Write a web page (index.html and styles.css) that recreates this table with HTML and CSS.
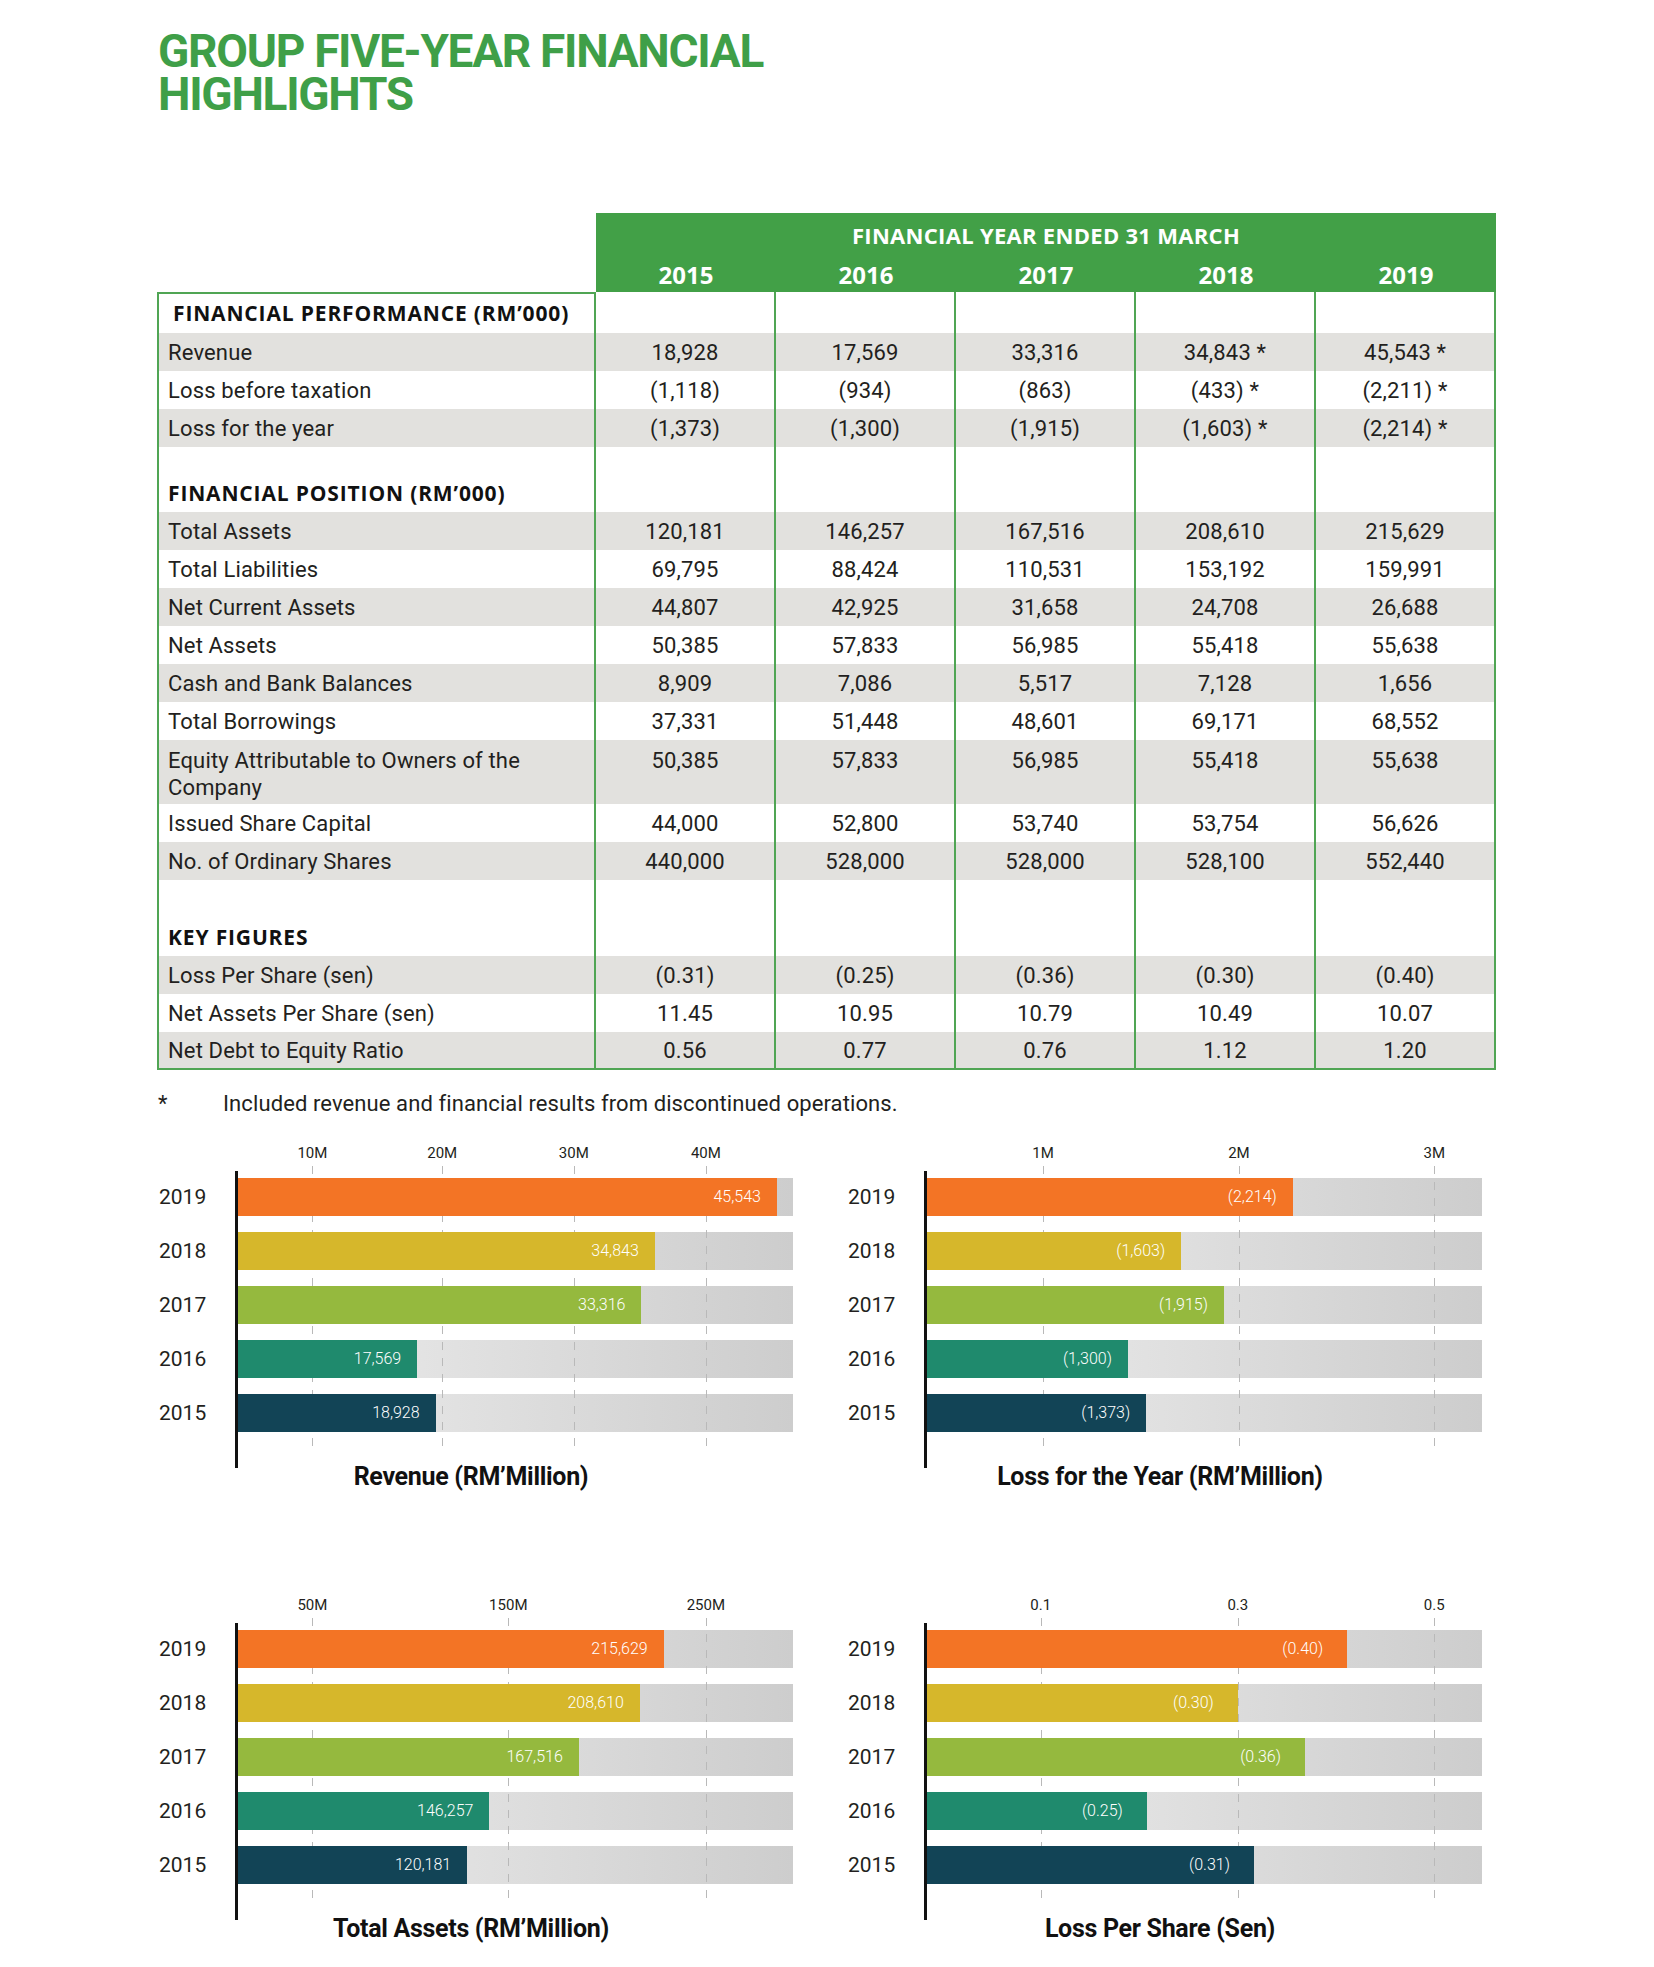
FILE: index.html
```html
<!DOCTYPE html>
<html lang="en">
<head>
<meta charset="utf-8">
<title>Group Five-Year Financial Highlights</title>
<link rel="stylesheet" href="styles.css">
</head>
<body>
<div class="page">
  <h1 class="title">GROUP FIVE-YEAR FINANCIAL<br>HIGHLIGHTS</h1>

  <table class="fin">
    <colgroup>
      <col class="c-lab"><col class="c-yr"><col class="c-yr"><col class="c-yr"><col class="c-yr"><col class="c-yr">
    </colgroup>
    <thead>
      <tr class="h1"><th class="blank"></th><th colspan="5">FINANCIAL YEAR ENDED 31 MARCH</th></tr>
      <tr class="h2"><th class="blank"></th><th>2015</th><th>2016</th><th>2017</th><th>2018</th><th>2019</th></tr>
    </thead>
    <tbody>
      <tr class="sec first"><td class="lab">FINANCIAL PERFORMANCE (RM’000)</td><td></td><td></td><td></td><td></td><td></td></tr>
      <tr class="g"><td class="lab">Revenue</td><td>18,928</td><td>17,569</td><td>33,316</td><td>34,843 *</td><td>45,543 *</td></tr>
      <tr><td class="lab">Loss before taxation</td><td>(1,118)</td><td>(934)</td><td>(863)</td><td>(433) *</td><td>(2,211) *</td></tr>
      <tr class="g"><td class="lab">Loss for the year</td><td>(1,373)</td><td>(1,300)</td><td>(1,915)</td><td>(1,603) *</td><td>(2,214) *</td></tr>
      <tr class="gap1"><td class="lab"></td><td></td><td></td><td></td><td></td><td></td></tr>
      <tr class="sec"><td class="lab">FINANCIAL POSITION (RM’000)</td><td></td><td></td><td></td><td></td><td></td></tr>
      <tr class="g"><td class="lab">Total Assets</td><td>120,181</td><td>146,257</td><td>167,516</td><td>208,610</td><td>215,629</td></tr>
      <tr><td class="lab">Total Liabilities</td><td>69,795</td><td>88,424</td><td>110,531</td><td>153,192</td><td>159,991</td></tr>
      <tr class="g"><td class="lab">Net Current Assets</td><td>44,807</td><td>42,925</td><td>31,658</td><td>24,708</td><td>26,688</td></tr>
      <tr><td class="lab">Net Assets</td><td>50,385</td><td>57,833</td><td>56,985</td><td>55,418</td><td>55,638</td></tr>
      <tr class="g"><td class="lab">Cash and Bank Balances</td><td>8,909</td><td>7,086</td><td>5,517</td><td>7,128</td><td>1,656</td></tr>
      <tr><td class="lab">Total Borrowings</td><td>37,331</td><td>51,448</td><td>48,601</td><td>69,171</td><td>68,552</td></tr>
      <tr class="g eq"><td class="lab">Equity Attributable to Owners of the Company</td><td>50,385</td><td>57,833</td><td>56,985</td><td>55,418</td><td>55,638</td></tr>
      <tr><td class="lab">Issued Share Capital</td><td>44,000</td><td>52,800</td><td>53,740</td><td>53,754</td><td>56,626</td></tr>
      <tr class="g"><td class="lab">No. of Ordinary Shares</td><td>440,000</td><td>528,000</td><td>528,000</td><td>528,100</td><td>552,440</td></tr>
      <tr class="gap2"><td class="lab"></td><td></td><td></td><td></td><td></td><td></td></tr>
      <tr class="sec kf"><td class="lab">KEY FIGURES</td><td></td><td></td><td></td><td></td><td></td></tr>
      <tr class="g"><td class="lab">Loss Per Share (sen)</td><td>(0.31)</td><td>(0.25)</td><td>(0.36)</td><td>(0.30)</td><td>(0.40)</td></tr>
      <tr><td class="lab">Net Assets Per Share (sen)</td><td>11.45</td><td>10.95</td><td>10.79</td><td>10.49</td><td>10.07</td></tr>
      <tr class="g last"><td class="lab">Net Debt to Equity Ratio</td><td>0.56</td><td>0.77</td><td>0.76</td><td>1.12</td><td>1.20</td></tr>
    </tbody>
  </table>

  <p class="note"><span class="star">*</span><span>Included revenue and financial results from discontinued operations.</span></p>

  <div class="charts">
    <!-- Revenue -->
    <div class="chart">
      <div class="ticks">
        <span class="tick" style="left:13.4%">10M</span>
        <span class="tick" style="left:36.8%">20M</span>
        <span class="tick" style="left:60.5%">30M</span>
        <span class="tick" style="left:84.3%">40M</span>
      </div>
      <div class="cbody">
        <div class="years"><span>2019</span><span>2018</span><span>2017</span><span>2016</span><span>2015</span></div>
        <div class="plot">
          <i class="grid" style="left:13.4%"></i><i class="grid" style="left:36.8%"></i><i class="grid" style="left:60.5%"></i><i class="grid" style="left:84.3%"></i>
          <div class="track"><div class="bar c19" style="width:97.1%">45,543</div></div>
          <div class="track"><div class="bar c18" style="width:75.1%">34,843</div></div>
          <div class="track"><div class="bar c17" style="width:72.7%">33,316</div></div>
          <div class="track"><div class="bar c16" style="width:32.3%">17,569</div></div>
          <div class="track"><div class="bar c15" style="width:35.6%">18,928</div></div>
        </div>
      </div>
      <div class="ctitle">Revenue (RM’Million)</div>
    </div>

    <!-- Loss for the year -->
    <div class="chart">
      <div class="ticks">
        <span class="tick" style="left:20.9%">1M</span>
        <span class="tick" style="left:56.2%">2M</span>
        <span class="tick" style="left:91.4%">3M</span>
      </div>
      <div class="cbody">
        <div class="years"><span>2019</span><span>2018</span><span>2017</span><span>2016</span><span>2015</span></div>
        <div class="plot">
          <i class="grid" style="left:20.9%"></i><i class="grid" style="left:56.2%"></i><i class="grid" style="left:91.4%"></i>
          <div class="track"><div class="bar c19" style="width:65.9%">(2,214)</div></div>
          <div class="track"><div class="bar c18" style="width:45.8%">(1,603)</div></div>
          <div class="track"><div class="bar c17" style="width:53.5%">(1,915)</div></div>
          <div class="track"><div class="bar c16" style="width:36.2%">(1,300)</div></div>
          <div class="track"><div class="bar c15" style="width:39.5%">(1,373)</div></div>
        </div>
      </div>
      <div class="ctitle">Loss for the Year (RM’Million)</div>
    </div>

    <!-- Total assets -->
    <div class="chart">
      <div class="ticks">
        <span class="tick" style="left:13.4%">50M</span>
        <span class="tick" style="left:48.7%">150M</span>
        <span class="tick" style="left:84.3%">250M</span>
      </div>
      <div class="cbody">
        <div class="years"><span>2019</span><span>2018</span><span>2017</span><span>2016</span><span>2015</span></div>
        <div class="plot">
          <i class="grid" style="left:13.4%"></i><i class="grid" style="left:48.7%"></i><i class="grid" style="left:84.3%"></i>
          <div class="track"><div class="bar c19" style="width:76.7%">215,629</div></div>
          <div class="track"><div class="bar c18" style="width:72.4%">208,610</div></div>
          <div class="track"><div class="bar c17" style="width:61.4%">167,516</div></div>
          <div class="track"><div class="bar c16" style="width:45.3%">146,257</div></div>
          <div class="track"><div class="bar c15" style="width:41.3%">120,181</div></div>
        </div>
      </div>
      <div class="ctitle">Total Assets (RM’Million)</div>
    </div>

    <!-- Loss per share -->
    <div class="chart wide-pad">
      <div class="ticks">
        <span class="tick" style="left:20.5%">0.1</span>
        <span class="tick" style="left:56%">0.3</span>
        <span class="tick" style="left:91.4%">0.5</span>
      </div>
      <div class="cbody">
        <div class="years"><span>2019</span><span>2018</span><span>2017</span><span>2016</span><span>2015</span></div>
        <div class="plot">
          <i class="grid" style="left:20.5%"></i><i class="grid" style="left:56%"></i><i class="grid" style="left:91.4%"></i>
          <div class="track"><div class="bar c19" style="width:75.7%">(0.40)</div></div>
          <div class="track"><div class="bar c18" style="width:56%">(0.30)</div></div>
          <div class="track"><div class="bar c17" style="width:68.1%">(0.36)</div></div>
          <div class="track"><div class="bar c16" style="width:39.6%">(0.25)</div></div>
          <div class="track"><div class="bar c15" style="width:58.9%">(0.31)</div></div>
        </div>
      </div>
      <div class="ctitle">Loss Per Share (Sen)</div>
    </div>
  </div>
</div>
</body>
</html>
```

FILE: styles.css
```css
* { box-sizing: border-box; }

body {
  margin: 0;
  background: #ffffff;
  font-family: Roboto, "Liberation Sans", sans-serif;
  color: #231f20;
}

.page {
  width: 1654px;
  padding: 30px 0 0 157px;
}

.title {
  margin: 0;
  padding-left: 1px;
  font-family: Roboto, "Liberation Sans", sans-serif;
  font-weight: 700;
  font-size: 46px;
  line-height: 43px;
  letter-spacing: -1.3px;
  color: #3f9f48;
}

/* ---------- table ---------- */
.fin {
  margin-top: 97px;
  width: 1339px;
  table-layout: fixed;
  border-collapse: separate;
  border-spacing: 0;
}
.c-lab { width: 439px; }
.c-yr { width: 180px; }

.fin thead th {
  background: #42a047;
  color: #ffffff;
  font-family: "Open Sans", Roboto, sans-serif;
  font-weight: 700;
  padding: 0;
  text-align: center;
  vertical-align: middle;
}
.fin thead th.blank { background: transparent; }
.fin .h1 th { height: 42px; font-size: 22px; letter-spacing: 0.3px; padding-top: 2px; }
.fin .h2 th { height: 37px; font-size: 24px; padding-top: 1px; }

.fin tbody td {
  height: 38px;
  padding: 0;
  text-align: center;
  vertical-align: middle;
  font-size: 22px;
  line-height: 27px;
  letter-spacing: 0.15px;
  color: #231f20;
  border-right: 2px solid #50a554;
}
.fin tbody td.lab {
  text-align: left;
  padding-left: 9px;
  border-left: 2px solid #50a554;
}
.fin tbody tr.g td { background: #e2e1de; }

.fin tbody tr.sec td.lab {
  font-family: "Open Sans", Roboto, sans-serif;
  font-weight: 700;
  font-size: 21px;
  letter-spacing: 0.85px;
  color: #111111;
}
.fin tbody tr.first td { height: 41px; }
.fin tbody tr.first td.lab { border-top: 2px solid #50a554; padding-left: 14px; }
.fin tbody tr.kf td { height: 37px; }
.fin tbody tr.gap1 td { height: 27px; }
.fin tbody tr.gap2 td { height: 39px; }
.fin tbody tr.eq td { height: 64px; vertical-align: top; padding-top: 7px; }
.fin tbody tr.last td { border-bottom: 2px solid #50a554; }

/* ---------- footnote ---------- */
.note {
  display: flex;
  margin: 21px 0 0 0;
  font-size: 22px;
  line-height: 26px;
  letter-spacing: 0.1px;
  color: #231f20;
}
.star { width: 66px; padding-left: 1px; }

/* ---------- charts ---------- */
.charts {
  margin-top: 26px;
  width: 1325px;
  display: grid;
  grid-template-columns: 636px 636px;
  column-gap: 53px;
  row-gap: 103px;
}

.ticks {
  position: relative;
  height: 20px;
  margin-left: 81px;
  margin-bottom: 8px;
}
.tick {
  position: absolute;
  top: 0;
  transform: translateX(-50%);
  font-size: 15px;
  line-height: 20px;
  color: #231f20;
  white-space: nowrap;
}

.cbody {
  display: grid;
  grid-template-columns: 78px 1fr;
}

.years {
  display: flex;
  flex-direction: column;
  gap: 16px;
  padding-top: 7px;
}
.years span {
  height: 38px;
  line-height: 38px;
  font-size: 21px;
  padding-left: 2px;
  color: #231f20;
}

.plot {
  position: relative;
  border-left: 3px solid #111111;
  padding: 7px 0 36px 0;
  display: flex;
  flex-direction: column;
  gap: 16px;
}

.grid {
  position: absolute;
  top: -5px;
  bottom: 16px;
  width: 1px;
  z-index: 1;
  background: repeating-linear-gradient(to bottom, #b9b9b9 0 8px, transparent 8px 16px);
}

.track {
  height: 38px;
  background: linear-gradient(to right, #eeeeee, #cdcdcd);
}

.bar {
  position: relative;
  z-index: 2;
  height: 38px;
  line-height: 38px;
  text-align: right;
  padding-right: 16px;
  font-size: 16px;
  font-weight: 300;
  color: #ffffff;
  white-space: nowrap;
}
.wide-pad .bar { padding-right: 24px; }

.c19 { background: #f37425; }
.c18 { background: #d6b72b; }
.c17 { background: #95b93e; }
.c16 { background: #1f8a6d; }
.c15 { background: #124456; }

.ctitle {
  margin-top: -6px;
  padding-right: 8px;
  text-align: center;
  font-weight: 700;
  font-size: 25px;
  line-height: 30px;
  letter-spacing: -0.3px;
  color: #111111;
}
```
